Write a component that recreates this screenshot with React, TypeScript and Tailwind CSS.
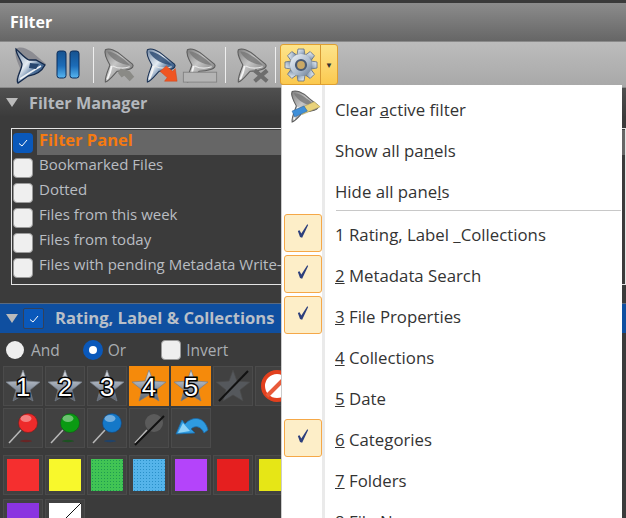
import type { ReactNode } from "react"

const font = "font-['Open_Sans','Noto_Sans',sans-serif]"

function FunnelDefs() {
  return (
    <defs>
      <linearGradient id="fb" x1="0" y1="0" x2="1" y2="1">
        <stop offset="0" stopColor="#6f85a2" />
        <stop offset="0.4" stopColor="#e6edf4" />
        <stop offset="0.65" stopColor="#4d7099" />
        <stop offset="1" stopColor="#1c3a68" />
      </linearGradient>
      <linearGradient id="fg" x1="0" y1="0" x2="1" y2="1">
        <stop offset="0" stopColor="#7e7e7e" />
        <stop offset="0.4" stopColor="#c6c6c6" />
        <stop offset="1" stopColor="#666" />
      </linearGradient>
    </defs>
  )
}

function Funnel({ color = false }: { color?: boolean }) {
  const line = color ? "#1d3354" : "#5e5e5e"
  return (
    <g>
      <path d="M6 3 C10 1 18 3 26 11 L36 19 C38 21 36 24 32 25 C26 27 22 27 19 27 C15 31 11 37 6 39 C5 34 9 26 11 20 C7 13 4 7 6 3Z" fill={color ? "url(#fb)" : "url(#fg)"} stroke={line} strokeWidth="1.2" />
      <path d="M8 5 C14 4 26 12 33 20 C24 20 12 14 8 5Z" fill={color ? "#27466f" : "#777"} opacity="0.8" />
      <path d="M13 21 C12 27 10 32 8 36" stroke="#f4f4f4" strokeWidth="2" fill="none" />
      <path d="M14 21 C20 24 27 24 33 22" stroke="#e8e8e8" strokeWidth="1.2" fill="none" />
    </g>
  )
}

function ActiveFunnel() {
  return (
    <svg width="36" height="38" viewBox="0 0 36 38">
      <path d="M4 3 C8 0 14 2 20 6 L34 18 L24 28 L14 30 L5 37 L4 34 L8 22 C5 15 2 8 4 3Z" fill="#8c8c92" />
      <path d="M4 3 C8 6 12 12 17 14 L24 14 L33 19 C30 25 24 29 16 30 L6 37 C3 33 10 24 10 18 C8 12 4 8 4 3Z" fill="url(#fb)" stroke="#14294a" strokeWidth="1.3" />
      <path d="M8 33 C14 29 22 24 29 20" stroke="#eef2f6" strokeWidth="1.6" fill="none" />
      <path d="M18 17 L27 18 L24 23 L17 22Z" fill="#27466f" />
    </svg>
  )
}

function ToolIcon({ kind }: { kind: string }) {
  return (
    <svg width="36" height="38" viewBox="0 0 40 40">
      <Funnel color={kind === "export"} />
      {kind === "cursor" && <path d="M20 29 L23 24 L33 27 L38 33 L33 38 L27 32 L24 34Z" fill="#8a8a86" />}
      {kind === "export" && <path d="M20 27 L27 21 L34 27 L37 24 L39 38 L25 38 L28 34 L20 27Z" fill="#ef5522" stroke="#c9401a" strokeWidth="0.5" />}
      {kind === "bar" && <rect x="1.5" y="28" width="37" height="11" fill="#b4b4b4" stroke="#818181" strokeWidth="1" />}
      {kind === "remove" && <path d="M24 26 L38 38 M38 26 L24 38" stroke="#6d6d6d" strokeWidth="4.5" />}
    </svg>
  )
}

function PauseIcon() {
  return (
    <svg width="24" height="30" viewBox="0 0 24 30">
      <defs>
        <linearGradient id="pb" x1="0" y1="0" x2="0" y2="1">
          <stop offset="0" stopColor="#16528f" />
          <stop offset="0.55" stopColor="#1c6cb8" />
          <stop offset="1" stopColor="#58b7f2" />
        </linearGradient>
      </defs>
      <rect x="1" y="1" width="9" height="27" rx="2.5" fill="url(#pb)" stroke="#0b2c5a" />
      <rect x="14" y="1" width="9" height="27" rx="2.5" fill="url(#pb)" stroke="#0b2c5a" />
    </svg>
  )
}

function GearIcon() {
  const teeth = [0, 45, 90, 135, 180, 225, 270, 315]
  return (
    <svg width="34" height="34" viewBox="0 0 34 34">
      <defs>
        <linearGradient id="gg" x1="0" y1="0" x2="1" y2="1">
          <stop offset="0" stopColor="#f2f6fa" />
          <stop offset="0.6" stopColor="#a9b9cc" />
          <stop offset="1" stopColor="#66788f" />
        </linearGradient>
      </defs>
      {teeth.map((a) => (
        <path key={a} d="M13 7 L14 1 L20 1 L21 7Z" fill="url(#gg)" stroke="#5d6d84" strokeWidth="0.8" transform={`rotate(${a} 17 17)`} />
      ))}
      <circle cx="17" cy="17" r="11" fill="url(#gg)" />
      <circle cx="17" cy="17" r="5" fill="#c9a866" stroke="#4a5a72" strokeWidth="2.2" />
    </svg>
  )
}

function Eraser() {
  return (
    <svg width="34" height="38" viewBox="0 0 40 40">
      <Funnel />
      <path d="M12 24 L32 15 L39 21 L18 30Z" fill="#e9d27a" stroke="#a79658" strokeWidth="0.6" />
      <path d="M6 26 L20 20 L24 26 L9 33Z" fill="#3f8fd8" stroke="#2a5f98" strokeWidth="0.6" />
    </svg>
  )
}

function Star({ n, slash }: { n?: number; slash?: boolean }) {
  return (
    <svg width="36" height="36" viewBox="0 0 36 36">
      <defs>
        <linearGradient id="st" x1="0" y1="0" x2="0" y2="1">
          <stop offset="0" stopColor="#e4e8ee" />
          <stop offset="0.6" stopColor="#8a94a2" />
          <stop offset="1" stopColor="#59616d" />
        </linearGradient>
      </defs>
      <path d="M18 2 L22 13 L35 14 L25 22 L28 33 L18 27 L8 33 L11 22 L1 14 L14 13Z" fill={slash ? "#55585c" : "url(#st)"} stroke={slash ? "#4a4a4a" : "#757c86"} strokeWidth="0.7" />
      {n && (
        <text x="18" y="28" textAnchor="middle" fontSize="26" fontFamily="Liberation Sans" fill="#fff" stroke="#000" strokeWidth="3" paintOrder="stroke">
          {n}
        </text>
      )}
      {slash && <path d="M4 33 L33 3" stroke="#111" strokeWidth="2" />}
    </svg>
  )
}

function Pin({ color, dark }: { color?: string; dark?: string }) {
  return (
    <svg width="36" height="36" viewBox="0 0 36 36">
      <path d="M4 33 L16 20" stroke="#b8b8b8" strokeWidth="1.5" />
      {dark && <ellipse cx="21" cy="31" rx="6" ry="1.2" fill={dark} opacity="0.7" />}
      {color ? (
        <>
          <circle cx="23" cy="13" r="9.5" fill={color} stroke={dark} strokeWidth="0.6" />
          <ellipse cx="21" cy="8.5" rx="5.5" ry="3.5" fill="#fff" opacity="0.4" />
        </>
      ) : (
        <>
          <circle cx="23" cy="13" r="9" fill="#5b5b5b" />
          <path d="M4 35 L33 6" stroke="#111" strokeWidth="2" />
        </>
      )}
    </svg>
  )
}

function NoIcon() {
  return (
    <svg width="36" height="36" viewBox="0 0 36 36">
      <circle cx="20" cy="18" r="14" fill="#fff" stroke="#e2401e" strokeWidth="4" />
      <path d="M10 28 L30 8" stroke="#e85a3a" strokeWidth="4" />
    </svg>
  )
}

function BackArrow() {
  return (
    <svg width="36" height="36" viewBox="0 0 36 36">
      <path d="M3 24 L9 10 L12 14 C20 5 32 7 35 20 L31 23 C28 16 22 15 18 19 L22 23Z" fill="#2f9be0" stroke="#1a6aa8" strokeWidth="0.8" />
      <path d="M5 23 L10 13 L17 21Z" fill="#8fd3f7" />
    </svg>
  )
}

function Cell({ on, children }: { on?: boolean; children?: ReactNode }) {
  return (
    <div className={`flex h-10 w-10 shrink-0 items-center justify-center ${on ? "bg-[#f58a0b]" : "border border-[#4b4b4b] bg-[#414141]"}`}>
      {children}
    </div>
  )
}

function Swatch({ color }: { color: string }) {
  return (
    <Cell>
      <div className={`h-8 w-8 ${color}`} />
    </Cell>
  )
}

function Tick() {
  return (
    <svg width="12" height="12" viewBox="0 0 12 12">
      <path d="M2 6.5 L5 9 L10 3" stroke="#fff" strokeWidth="1" fill="none" />
    </svg>
  )
}

function Box({ on }: { on?: boolean }) {
  return (
    <div className={`flex h-5 w-5 shrink-0 items-center justify-center rounded-[4px] ${on ? "bg-[#0a58ba]" : "border border-[#9a9a9a] bg-[#efefef]"}`}>
      {on && <Tick />}
    </div>
  )
}

function MenuCheck() {
  return (
    <div className="flex h-[38px] w-[38px] items-center justify-center rounded-[3px] border border-[#f5a848] bg-[#fdeec8] pb-[3px]">
      <svg width="12" height="16" viewBox="0 0 14 18">
        <path d="M1 9 L3 8 L5 12 L12 1 L13 2 L6 17 L3.5 16Z" fill="#2d3f7c" />
      </svg>
    </div>
  )
}

function MenuRow({ check, children }: { check?: boolean; children: ReactNode }) {
  return (
    <div className="flex h-[41px] shrink-0 items-center">
      <div className="flex w-[41px] shrink-0 justify-center pl-[1px]">{check && <MenuCheck />}</div>
      <div className="pt-[4px] pl-[12px] text-[16.8px] whitespace-nowrap text-[#333]">{children}</div>
    </div>
  )
}

const filters = ["Bookmarked Files", "Dotted", "Files from this week", "Files from today", "Files with pending Metadata Write-back"]

export default function App() {
  return (
    <div className={`relative h-[518px] w-[626px] overflow-hidden bg-[#3b3b3b] ${font}`}>
      <div className="flex h-[41px] items-center border-t-[3px] border-[#3a3a3a] bg-gradient-to-b from-[#8c8c8c] to-[#666] pl-[10px] text-[16px] font-bold text-white">
        Filter
      </div>
      <div className="flex h-[47px] items-center border-y border-[#8a8a8a] bg-gradient-to-b from-[#bcbcbc] to-[#a8a8a8] pl-[12px]">
        <ActiveFunnel />
        <div className="ml-[8px]"><PauseIcon /></div>
        <div className="ml-[13px] h-[36px] w-px bg-[#eee]" />
        <div className="ml-[6px]"><ToolIcon kind="cursor" /></div>
        <div className="ml-[6px]"><ToolIcon kind="export" /></div>
        <div className="ml-[4px]"><ToolIcon kind="bar" /></div>
        <div className="ml-[7px] h-[36px] w-px bg-[#eee]" />
        <div className="ml-[7px]"><ToolIcon kind="remove" /></div>
        <div className="ml-[6px] h-[36px] w-px bg-[#eee]" />
        <div className="ml-[4px] flex h-[41px] items-center rounded-[3px] border border-[#e0a030] bg-gradient-to-b from-[#fde48a] to-[#fbc94e]">
          <div className="flex h-full w-[40px] items-center justify-center border-r border-[#d69a34]"><GearIcon /></div>
          <div className="flex w-[16px] justify-center text-[8px] text-[#333]">▼</div>
        </div>
      </div>
      <div className="flex h-[28px] items-center gap-[11px] bg-gradient-to-b from-[#505050] to-[#3c3c3c] pl-[6px] text-[16.2px] font-bold text-[#b4b8bd]">
        <span className="h-0 w-0 border-x-[6px] border-t-[9px] border-x-transparent border-t-[#bbb]" />
        <span className="pt-[2px]">Filter Manager</span>
      </div>
      <div className="pl-[11px] pt-[12px]">
        <div className="h-[157px] border border-[#e4e4e4] pt-[1px] pl-[1px]">
          <div className="flex h-[25px] items-center gap-[4px]">
            <Box on />
            <div className="flex h-[25px] flex-1 items-center bg-[#666] pb-[5px] pl-[2px] text-[16.5px] font-bold text-[#f57a10]">Filter Panel</div>
          </div>
          {filters.map((f) => (
            <div key={f} className="flex h-[25px] items-center gap-[4px] text-[15px] whitespace-nowrap text-[#b9bdc2]">
              <Box />
              <span className="pb-[6px] pl-[2px]">{f}</span>
            </div>
          ))}
        </div>
      </div>
      <div className="mt-[18px] flex h-[30px] items-center gap-[5px] border-t border-[#5a6a80] bg-[#0f4fa0] pl-[6px] text-[16.6px] font-bold whitespace-nowrap text-[#b9bfc8]">
        <span className="h-0 w-0 border-x-[6px] border-t-[9px] border-x-transparent border-t-[#bbb]" />
        <div className="flex h-[21px] w-[21px] items-center justify-center rounded-[2px] border border-[#33415a] bg-[#0a58ba]"><Tick /></div>
        <span className="pl-[6px]">Rating, Label &amp; Collections</span>
      </div>
      <div className="flex h-[33px] items-center pl-[6px] text-[15.5px] text-[#a9adb2]">
        <span className="h-[18px] w-[18px] rounded-full bg-[#efefef]" />
        <span className="ml-[7px] pt-[2px]">And</span>
        <span className="ml-[23px] flex h-[20px] w-[20px] items-center justify-center rounded-full bg-[#0a58ba]">
          <span className="h-[8px] w-[8px] rounded-full bg-white" />
        </span>
        <span className="ml-[5px] pt-[2px]">Or</span>
        <span className="ml-[35px]"><Box /></span>
        <span className="ml-[5px] pt-[2px]">Invert</span>
      </div>
      <div className="flex flex-col gap-[2px] pl-[3px]">
        <div className="flex gap-[2px]">
          <Cell><Star n={1} /></Cell>
          <Cell><Star n={2} /></Cell>
          <Cell><Star n={3} /></Cell>
          <Cell on><Star n={4} /></Cell>
          <Cell on><Star n={5} /></Cell>
          <Cell><Star slash /></Cell>
          <Cell><NoIcon /></Cell>
        </div>
        <div className="flex gap-[2px]">
          <Cell><Pin color="#ee2b2b" dark="#7a1a1a" /></Cell>
          <Cell><Pin color="#0a9a12" dark="#0d5a14" /></Cell>
          <Cell><Pin color="#1478c8" dark="#12457a" /></Cell>
          <Cell><Pin /></Cell>
          <Cell><BackArrow /></Cell>
        </div>
        <div className="mt-[5px] flex gap-[2px]">
          <Swatch color="bg-[#f52f2f]" />
          <Swatch color="bg-[#f8f82c]" />
          <Swatch color="bg-[#41c454] bg-[radial-gradient(#1f9a50_30%,transparent_35%)] bg-[length:3px_3px]" />
          <Swatch color="bg-[#55b4ea] bg-[radial-gradient(#2a90c8_30%,transparent_35%)] bg-[length:3px_3px]" />
          <Swatch color="bg-[#b444fa]" />
          <Swatch color="bg-[#e51f1f]" />
          <Swatch color="bg-[#e6e616]" />
        </div>
        <div className="mt-[2px] flex gap-[2px]">
          <Swatch color="bg-[#8a34e0] bg-[radial-gradient(#5a28b0_40%,transparent_45%)] bg-[length:2px_2px]" />
          <Cell>
            <svg width="32" height="32" viewBox="0 0 32 32">
              <rect width="32" height="32" fill="#fff" />
              <path d="M0 32 L32 0" stroke="#111" strokeWidth="1" />
            </svg>
          </Cell>
        </div>
      </div>

      <svg className="absolute h-0 w-0"><FunnelDefs /></svg>
      <div className="absolute top-[85px] left-[281px] flex h-[433px] w-[341px] flex-col overflow-hidden border-l border-[#ccc] bg-white">
        <div className="absolute top-0 bottom-0 left-[40px] w-[3px] bg-[#eaeaea]" />
        <div className="absolute top-[2px] left-[5px]"><Eraser /></div>
        <div className="relative flex flex-col pt-[2px]">
          <MenuRow><>Clear <u>a</u>ctive filter</></MenuRow>
          <MenuRow><>Show all pa<u>n</u>els</></MenuRow>
          <MenuRow><>Hide all pane<u>l</u>s</></MenuRow>
          <div className="ml-[54px] h-px w-[285px] shrink-0 bg-[#c8c8c8]" />
          <div className="h-px" />
          <MenuRow check>1 Rating, Label _Collections</MenuRow>
          <MenuRow check><><u>2</u> Metadata Search</></MenuRow>
          <MenuRow check><><u>3</u> File Properties</></MenuRow>
          <MenuRow><><u>4</u> Collections</></MenuRow>
          <MenuRow><><u>5</u> Date</></MenuRow>
          <MenuRow check><><u>6</u> Categories</></MenuRow>
          <MenuRow><><u>7</u> Folders</></MenuRow>
          <MenuRow><><u>8</u> File Name</></MenuRow>
        </div>
      </div>
    </div>
  )
}
